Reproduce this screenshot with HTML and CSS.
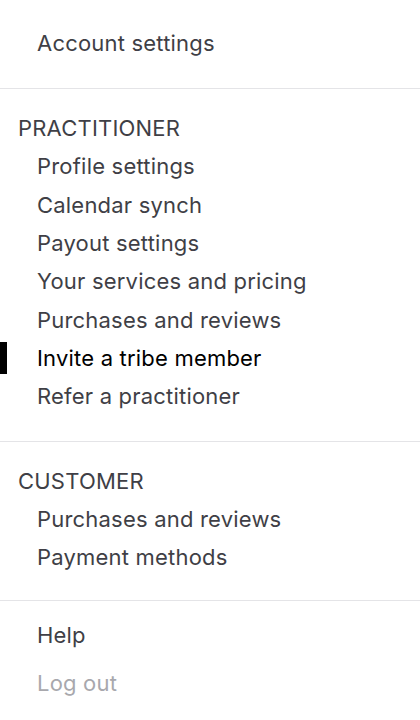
FILE: index.html
```html
<!DOCTYPE html>
<html lang="en">
<head>
<meta charset="utf-8">
<link rel="stylesheet" href="styles.css">
<title>Menu</title>
</head>
<body>
<nav class="menu">
  <section class="group group-top">
    <a class="item">Account settings</a>
  </section>
  <section class="group group-mid">
    <div class="heading">PRACTITIONER</div>
    <a class="item">Profile settings</a>
    <a class="item">Calendar synch</a>
    <a class="item">Payout settings</a>
    <a class="item">Your services and pricing</a>
    <a class="item">Purchases and reviews</a>
    <a class="item active">Invite a tribe member</a>
    <a class="item">Refer a practitioner</a>
  </section>
  <section class="group">
    <div class="heading">CUSTOMER</div>
    <a class="item">Purchases and reviews</a>
    <a class="item">Payment methods</a>
  </section>
  <section class="group group-bottom">
    <a class="item tall">Help</a>
    <a class="item tall muted">Log out</a>
  </section>
</nav>
</body>
</html>
```
FILE: styles.css
```css
html, body {
  margin: 0;
  padding: 0;
  background: #ffffff;
}
body {
  font-family: Inter, "Noto Sans", sans-serif;
  font-size: 22px;
  font-weight: 400;
  letter-spacing: 0.2px;
  color: #3f3f46;
}
.menu {
  display: flex;
  flex-direction: column;
  width: 420px;
}
.group {
  display: flex;
  flex-direction: column;
  padding: 20px 0 24px;
  border-bottom: 1px solid #e4e4e7;
}
.group-top {
  padding-top: 24px;
  padding-bottom: 26px;
}
.group-mid {
  padding-bottom: 25px;
}
.group-bottom {
  border-bottom: none;
  padding-top: 10px;
}
.heading {
  line-height: 38px;
  height: 38px;
  padding-left: 18px;
  color: #3f3f46;
}
.item {
  position: relative;
  display: block;
  line-height: 38.33px;
  height: 38.33px;
  padding-left: 37px;
  color: #3f3f46;
  text-decoration: none;
}
.item.tall {
  line-height: 48px;
  height: 48px;
}
.item.active {
  color: #000000;
}
.item.active::before {
  content: "";
  position: absolute;
  left: 0;
  top: 3px;
  width: 7px;
  height: 32px;
  background: #000000;
}
.item.muted {
  color: #a8a8ad;
}
```
